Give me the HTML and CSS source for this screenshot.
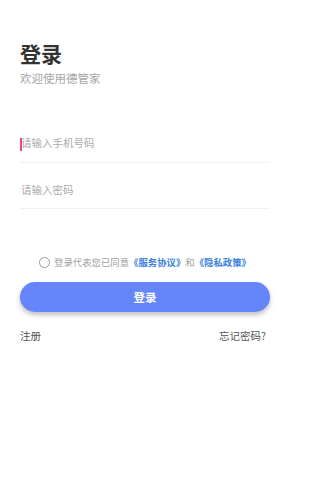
FILE: index.html
```html
<!DOCTYPE html>
<html lang="zh-CN">
<head>
<meta charset="utf-8">
<title>登录</title>
<link rel="stylesheet" href="styles.css">
</head>
<body>
<main class="page">
  <h1 class="title">登录</h1>
  <p class="subtitle">欢迎使用德管家</p>
  <form class="form">
    <label class="field">
      <span class="caret"></span>
      <input class="input" type="text" placeholder="请输入手机号码">
    </label>
    <label class="field">
      <input class="input" type="password" placeholder="请输入密码">
    </label>
    <div class="agree">
      <span class="radio"></span>
      <span class="agree-text">登录代表您已同意<a class="link">《服务协议》</a>和<a class="link">《隐私政策》</a></span>
    </div>
    <button class="btn" type="button">登录</button>
    <div class="links">
      <a class="small">注册</a>
      <a class="small">忘记密码?</a>
    </div>
  </form>
</main>
</body>
</html>
```
FILE: styles.css
```css
* { box-sizing: border-box; }
html, body { margin: 0; padding: 0; background: #fff; }
body { font-family: "Noto Sans CJK SC", "Noto Sans", sans-serif; }
.page { width: 289px; padding: 40px 19px 0 20px; }
.title {
  margin: 0;
  font-size: 21px;
  line-height: 26px;
  font-weight: 700;
  color: #333;
}
.subtitle {
  margin: 4px 0 0;
  font-size: 11.5px;
  line-height: 16px;
  color: #a5a5a5;
}
.form { margin-top: 32px; display: flex; flex-direction: column; }
.field {
  position: relative;
  display: block;
  height: 45px;
  padding-top: 15px;
  border-bottom: 1px solid #f1f1f1;
}
.field + .field { height: 46px; padding-top: 17px; }
.input {
  display: block;
  width: 100%;
  border: none;
  outline: none;
  padding: 0 0 0 1px;
  margin: 0;
  background: transparent;
  font-family: inherit;
  font-size: 10.5px;
  line-height: 20px;
  height: 20px;
  color: #333;
}
.input::placeholder { color: #aaa; }
.caret {
  position: absolute;
  left: 0;
  top: 20px;
  width: 2px;
  height: 13px;
  background: #f0457c;
}
.agree {
  margin-top: 45px;
  display: flex;
  align-items: center;
  justify-content: center;
  gap: 4px;
  height: 16px;
}
.radio {
  width: 11px;
  height: 11px;
  border: 1px solid #999;
  border-radius: 50%;
  flex: none;
}
.agree-text {
  font-size: 9.4px;
  line-height: 16px;
  color: #a0a0a0;
  white-space: nowrap;
}
.link { color: #3b80de; font-weight: 700; }
.btn {
  margin-top: 12px;
  height: 30px;
  width: 100%;
  border: none;
  border-radius: 15px;
  background: #6585fa;
  box-shadow: 0 3px 5px rgba(0,0,0,0.25);
  color: #fff;
  font-family: inherit;
  font-size: 11.5px;
  font-weight: 700;
  padding: 0;
}
.links {
  margin-top: 16px;
  display: flex;
  justify-content: space-between;
  padding-right: 4px;
}
.small { font-size: 10.5px; line-height: 16px; color: #555; }
```
